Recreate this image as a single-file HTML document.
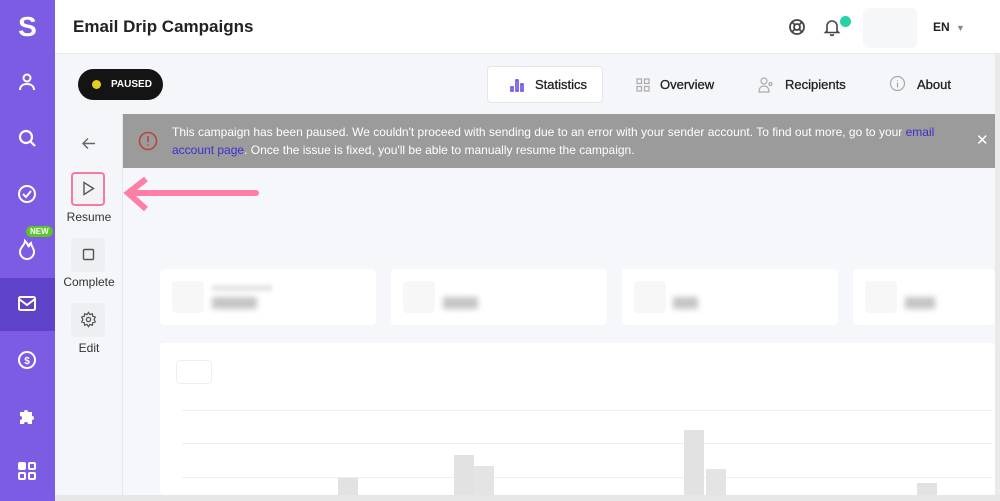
<!DOCTYPE html>
<html><head><meta charset="utf-8"><style>
*{box-sizing:border-box;margin:0;padding:0}
body{width:1000px;height:501px;overflow:hidden;background:#f6f7fb;font-family:"Liberation Sans",sans-serif;position:relative}
.abs{position:absolute}
.side{left:0;top:0;width:55px;height:501px;background:#7b5ce2}
.side svg{position:absolute;left:17px}
.hdr{left:55px;top:0;width:945px;height:54px;background:#fff;border-bottom:1px solid #e8e9ef}
.sub{left:55px;top:54px;width:945px;height:60px;background:#f5f6fa}
.lp{left:55px;top:114px;width:68px;height:387px;background:#f5f6fa;border-right:1px solid #e6e7ec}
.btn{position:absolute;left:71px;width:34px;height:34px;background:#eeeff2;border-radius:4px}
.lbl{position:absolute;width:68px;left:55px;text-align:center;font-size:12px;color:#333}
.card{background:#fff;border-radius:4px;height:56px;top:269px;width:216px}
.tab{font-size:13px;color:#222;line-height:16px;-webkit-text-stroke:0.3px #222}
</style></head><body>
<div class="abs side">
<div class="abs" style="left:0;width:55px;text-align:center;top:10px;line-height:34px;color:#fff;font-weight:bold;font-size:28px">S</div>
<svg style="top:72px" width="20" height="20" viewBox="0 0 20 20" fill="none" stroke="#fff" stroke-width="2"><circle cx="10" cy="6" r="3.5"/><path d="M3 18c0-4 3-6 7-6s7 2 7 6"/></svg>
<svg style="top:128px" width="20" height="20" viewBox="0 0 20 20" fill="none" stroke="#fff" stroke-width="2.2"><circle cx="9" cy="9" r="6"/><path d="M13.5 13.5L18 18"/></svg>
<svg style="top:184px" width="20" height="20" viewBox="0 0 20 20" fill="none" stroke="#fff" stroke-width="2"><circle cx="10" cy="10" r="8"/><path d="M6 10l3 3 5-6"/></svg>
<div class="abs" style="left:26px;top:226px;background:#5fc32d;color:#fff;font-size:8px;font-weight:bold;border-radius:6px;padding:1px 4px">NEW</div>
<svg style="top:238px" width="20" height="22" viewBox="0 0 20 22" fill="none" stroke="#fff" stroke-width="2"><path d="M8 3c0 4-5 6-5 11a7 7 0 0014 0c0-4-3-6-3-9-2 1-2 3-2 4-1-2-2-4-4-6z"/></svg>
<div class="abs" style="left:0;top:278px;width:55px;height:53px;background:#5e42c7"></div>
<svg style="top:295px" width="20" height="18" viewBox="0 0 20 18" fill="none" stroke="#fff" stroke-width="2"><rect x="2" y="2" width="16" height="13" rx="1.5"/><path d="M2 4l8 6 8-6"/></svg>
<svg style="top:350px" width="20" height="20" viewBox="0 0 20 20" fill="none" stroke="#fff" stroke-width="2"><circle cx="10" cy="10" r="8"/><text x="10" y="14" font-size="10" fill="#fff" stroke="none" text-anchor="middle" font-family="Liberation Sans" font-weight="bold">$</text></svg>
<svg style="top:406px" width="20" height="20" viewBox="0 0 20 20" fill="#fff"><path d="M3 6h4a2 2 0 114 0h4v4a2 2 0 110 4v4h-4a2 2 0 10-4 0H3v-4a2 2 0 100-4z"/></svg>
<svg style="top:461px" width="20" height="20" viewBox="0 0 20 20" fill="none" stroke="#fff" stroke-width="2"><rect x="2" y="2" width="6" height="6" rx="1" fill="#fff"/><rect x="12" y="2" width="6" height="6" rx="1"/><rect x="2" y="12" width="6" height="6" rx="1"/><rect x="12" y="12" width="6" height="6" rx="1"/></svg>
</div>
<div class="abs hdr">
<div class="abs" style="left:18px;top:17px;font-size:17px;font-weight:bold;color:#222">Email Drip Campaigns</div>
<svg class="abs" style="left:733px;top:18px" width="18" height="18" viewBox="0 0 18 18" fill="none" stroke="#444" stroke-width="1.8"><circle cx="9" cy="9" r="7"/><circle cx="9" cy="9" r="3"/><path d="M4 4l3 3M14 4l-3 3M4 14l3-3M14 14l-3-3"/></svg>
<svg class="abs" style="left:768px;top:17px" width="18" height="20" viewBox="0 0 18 20" fill="none" stroke="#444" stroke-width="1.6"><path d="M4 14V9a5 5 0 0110 0v5l1.5 1.5h-13z"/><path d="M7.5 17a1.5 1.5 0 003 0"/></svg>
<div class="abs" style="left:785px;top:16px;width:11px;height:11px;border-radius:50%;background:#27d3a6"></div>
<div class="abs" style="left:808px;top:8px;width:54px;height:40px;border-radius:5px;background:#f6f7f9"></div>
<div class="abs" style="left:878px;top:20px;font-size:12px;font-weight:bold;color:#222">EN <span style="color:#888;font-size:9px;margin-left:3px">▼</span></div>
</div>
<div class="abs sub">
<div class="abs" style="left:23px;top:15px;width:85px;height:31px;border-radius:16px;background:#141414"></div>
<div class="abs" style="left:37px;top:26px;width:9px;height:9px;border-radius:50%;background:#e3cf1c"></div>
<div class="abs" style="left:56px;top:25px;line-height:12px;color:#fff;font-size:10px;font-weight:bold">PAUSED</div>
<div class="abs" style="left:432px;top:12px;width:116px;height:37px;background:#fff;border:1px solid #e4e5ea;border-radius:4px"></div>
<svg class="abs" style="left:455px;top:24px" width="14" height="14" viewBox="0 0 14 14" fill="none" stroke="#6a4ee0" stroke-width="1.6"><rect x="1" y="9" width="2" height="4"/><rect x="6" y="2" width="2" height="11"/><rect x="11" y="6" width="2" height="7"/></svg>
<div class="abs tab" style="left:480px;top:23px">Statistics</div>
<svg class="abs" style="left:581px;top:24px" width="14" height="14" viewBox="0 0 14 14" fill="none" stroke="#aaa" stroke-width="1.2"><rect x="1" y="1" width="4.5" height="4.5"/><rect x="8.5" y="1" width="4.5" height="4.5"/><rect x="1" y="8.5" width="4.5" height="4.5"/><rect x="8.5" y="8.5" width="4.5" height="4.5"/></svg>
<div class="abs tab" style="left:605px;top:23px">Overview</div>
<svg class="abs" style="left:703px;top:22px" width="17" height="17" viewBox="0 0 17 17" fill="none" stroke="#aaa" stroke-width="1.2"><circle cx="6" cy="5" r="3"/><path d="M1 16c0-4 2-6 5-6s5 2 5 6z"/><circle cx="12.5" cy="8" r="1.5"/></svg>
<div class="abs tab" style="left:730px;top:23px">Recipients</div>
<svg class="abs" style="left:834px;top:21px" width="17" height="17" viewBox="0 0 17 17" fill="none" stroke="#aaa" stroke-width="1.2"><circle cx="8.5" cy="8.5" r="7"/><path d="M8.5 7.5v5M8.5 5v.8"/></svg>
<div class="abs tab" style="left:862px;top:23px">About</div>
</div>
<div class="abs lp"></div>
<svg class="abs" style="left:81px;top:137px" width="15" height="13" viewBox="0 0 15 13" fill="none" stroke="#666" stroke-width="1.4"><path d="M14 6.5H2M7 1.5l-5 5 5 5"/></svg>
<div class="btn" style="top:172px;border:2px solid #f27aa4;background:#f3f3f5"></div>
<svg class="abs" style="left:82px;top:181px" width="13" height="15" viewBox="0 0 13 15" fill="none" stroke="#555" stroke-width="1.4"><path d="M2 1.5v12l9.5-6z"/></svg>
<div class="lbl" style="top:210px">Resume</div>
<div class="btn" style="top:238px"></div>
<svg class="abs" style="left:82px;top:248px" width="13" height="13" viewBox="0 0 13 13" fill="none" stroke="#555" stroke-width="1.4"><rect x="1.5" y="1.5" width="10" height="10" rx="1"/></svg>
<div class="lbl" style="top:275px">Complete</div>
<div class="btn" style="top:303px"></div>
<svg class="abs" style="left:80px;top:311px" width="17" height="17" viewBox="0 0 24 24" fill="none" stroke="#555" stroke-width="1.8"><circle cx="12" cy="12" r="3"/><path d="M12 2l2 3 3.5-1 .5 3.5 3.5 1-1.5 3.5 1.5 3.5-3.5 1-.5 3.5-3.5-1-2 3-2-3-3.5 1-.5-3.5-3.5-1L4 12 2.5 8.5l3.5-1L6.5 4 10 5z"/></svg>
<div class="lbl" style="top:341px">Edit</div>
<div class="abs" style="left:123px;top:114px;width:872px;height:54px;background:#9b9b9c"></div>
<svg class="abs" style="left:138px;top:131px" width="20" height="20" viewBox="0 0 20 20" fill="none" stroke="#b5483a" stroke-width="1.6"><circle cx="10" cy="10" r="8.5"/><path d="M10 5v6M10 13.5v1.2"/></svg>
<div class="abs" style="left:172px;top:123px;width:780px;font-size:12px;line-height:18px;color:#fff">This campaign has been paused. We couldn't proceed with sending due to an error with your sender account. To find out more, go to your <span style="color:#3b2ed0">email account page</span>. Once the issue is fixed, you'll be able to manually resume the campaign.</div>
<div class="abs" style="left:976px;top:131px;color:#fff;font-size:15px">✕</div>
<svg class="abs" style="left:122px;top:174px" width="140" height="40" viewBox="0 0 140 40"><path d="M134 19H12" stroke="#fd7fa5" stroke-width="6" stroke-linecap="round"/><path d="M24 5L6 19l18 16" stroke="#fd7fa5" stroke-width="6" fill="none"/></svg>
<div class="abs card" style="left:160px"></div>
<div class="abs card" style="left:391px"></div>
<div class="abs card" style="left:622px"></div>
<div class="abs card" style="left:853px;width:142px"></div>
<div class="abs" style="left:172px;top:281px;width:32px;height:32px;background:#f7f7f7;border-radius:4px"></div>
<div class="abs" style="left:403px;top:281px;width:32px;height:32px;background:#f7f7f7;border-radius:4px"></div>
<div class="abs" style="left:634px;top:281px;width:32px;height:32px;background:#f7f7f7;border-radius:4px"></div>
<div class="abs" style="left:865px;top:281px;width:32px;height:32px;background:#f7f7f7;border-radius:4px"></div>
<div class="abs" style="left:212px;top:285px;width:60px;height:6px;background:#e4e4e4;filter:blur(2px)"></div>
<div class="abs" style="left:212px;top:297px;width:45px;height:12px;background:#c4c4c4;filter:blur(3px)"></div>
<div class="abs" style="left:443px;top:297px;width:35px;height:12px;background:#c4c4c4;filter:blur(3px)"></div>
<div class="abs" style="left:673px;top:297px;width:25px;height:12px;background:#c4c4c4;filter:blur(3px)"></div>
<div class="abs" style="left:905px;top:297px;width:30px;height:12px;background:#c4c4c4;filter:blur(3px)"></div>
<div class="abs" style="left:160px;top:343px;width:835px;height:152px;background:#fff;border-radius:4px"></div>
<div class="abs" style="left:176px;top:360px;width:36px;height:24px;border:1px solid #eee;border-radius:4px"></div>
<div class="abs" style="left:182px;top:410px;width:810px;height:1px;background:#eee"></div>
<div class="abs" style="left:182px;top:443px;width:810px;height:1px;background:#eee"></div>
<div class="abs" style="left:182px;top:477px;width:810px;height:1px;background:#eee"></div>
<div class="abs" style="left:338px;top:478px;width:20px;height:17px;background:#e2e2e2"></div>
<div class="abs" style="left:454px;top:455px;width:20px;height:40px;background:#e2e2e2"></div>
<div class="abs" style="left:474px;top:466px;width:20px;height:29px;background:#e4e4e4"></div>
<div class="abs" style="left:684px;top:430px;width:20px;height:65px;background:#e2e2e2"></div>
<div class="abs" style="left:706px;top:469px;width:20px;height:26px;background:#e4e4e4"></div>
<div class="abs" style="left:917px;top:483px;width:20px;height:12px;background:#e2e2e2"></div>
<div class="abs" style="left:995px;top:54px;width:5px;height:447px;background:#eaeaea"></div>
<div class="abs" style="left:55px;top:495px;width:945px;height:6px;background:#e6e6e6"></div>
</body></html>
